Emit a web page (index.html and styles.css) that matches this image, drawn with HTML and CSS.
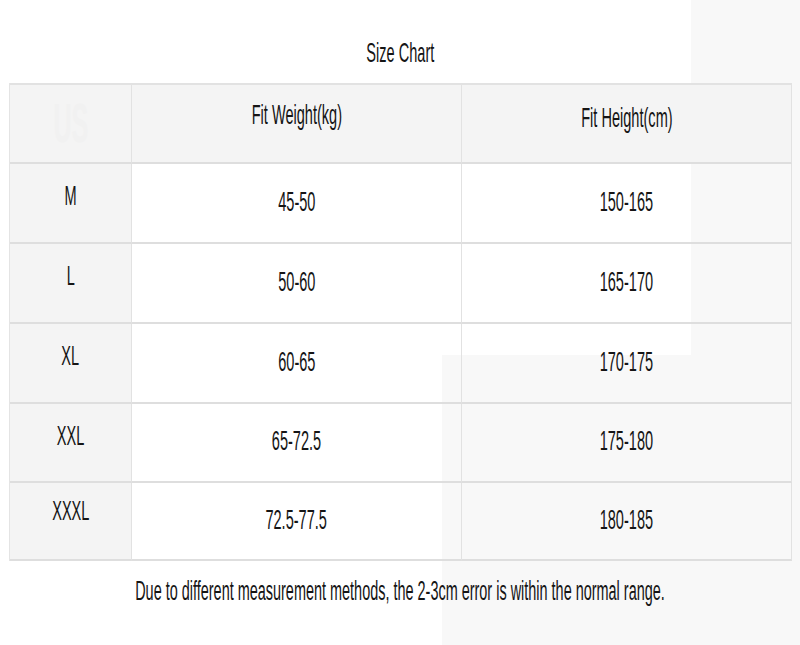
FILE: index.html
```html
<!DOCTYPE html>
<html lang="en">
<head>
<meta charset="utf-8">
<title>Size Chart</title>
<link rel="stylesheet" href="styles.css">
</head>
<body>
<main class="page">
  <h1 class="title"><span class="txt">Size Chart</span></h1>
  <div class="chart">
    <div class="cell head side"><span class="txt ghost">US</span></div>
    <div class="cell head"><span class="txt">Fit Weight(kg)</span></div>
    <div class="cell head alt"><span class="txt">Fit Height(cm)</span></div>

    <div class="cell side"><span class="txt">M</span></div>
    <div class="cell"><span class="txt">45-50</span></div>
    <div class="cell"><span class="txt">150-165</span></div>

    <div class="cell side"><span class="txt">L</span></div>
    <div class="cell"><span class="txt">50-60</span></div>
    <div class="cell"><span class="txt">165-170</span></div>

    <div class="cell side"><span class="txt">XL</span></div>
    <div class="cell"><span class="txt">60-65</span></div>
    <div class="cell"><span class="txt">170-175</span></div>

    <div class="cell side"><span class="txt">XXL</span></div>
    <div class="cell"><span class="txt">65-72.5</span></div>
    <div class="cell"><span class="txt">175-180</span></div>

    <div class="cell side last"><span class="txt">XXXL</span></div>
    <div class="cell"><span class="txt">72.5-77.5</span></div>
    <div class="cell"><span class="txt">180-185</span></div>
  </div>
  <p class="note"><span class="txt">Due to different measurement methods, the 2-3cm error is within the normal range.</span></p>
</main>
</body>
</html>
```
FILE: styles.css
```css
html, body {
  margin: 0;
  padding: 0;
}

body {
  font-family: "Liberation Sans", Arial, sans-serif;
  color: #151515;
}

.page {
  width: 800px;
  height: 645px;
  overflow: hidden;
  background:
    linear-gradient(#f8f8f8, #f8f8f8) right top / 109px 100% no-repeat,
    linear-gradient(#f8f8f8, #f8f8f8) right bottom / 358px 290px no-repeat,
    #ffffff;
  display: flex;
  flex-direction: column;
}

.txt {
  display: inline-block;
  flex: none;
  font-size: 28px;
  line-height: 28px;
  white-space: nowrap;
  transform: scaleX(0.52);
  transform-origin: center;
}

.title {
  margin: 37px 0 0;
  height: 28px;
  font-weight: normal;
  text-align: center;
  line-height: 28px;
}

.chart {
  margin: 18px 0 0 9px;
  width: 782px;
  display: grid;
  grid-template-columns: 122px 330px 330px;
  grid-template-rows: 81px 80px 80px 80px 79px 78px;
  border-left: 1px solid #e4e4e4;
  box-sizing: border-box;
}

.cell {
  display: flex;
  align-items: center;
  justify-content: center;
  border-right: 1px solid #e2e2e2;
  border-bottom: 2px solid #dedede;
  padding-bottom: 3px;
  box-sizing: border-box;
}

.cell.head {
  background: #f4f4f4;
  border-top: 2px solid #e2e2e2;
  padding-bottom: 18px;
}

.cell.head.alt {
  padding-bottom: 12px;
}

.cell.side {
  background: #f4f4f4;
  padding-bottom: 14px;
}

.cell.side.last {
  padding-bottom: 20px;
}

.ghost {
  color: #f1f1f1;
  font-size: 56px;
  line-height: 56px;
  font-weight: bold;
  transform: scaleX(0.45);
}

.cell.head.side {
  padding-bottom: 2px;
}

.note {
  margin: 16px 0 0;
  height: 28px;
  display: flex;
  justify-content: center;
  line-height: 28px;
}

.note .txt {
  font-size: 27px;
  transform: scaleX(0.535);
}
```
